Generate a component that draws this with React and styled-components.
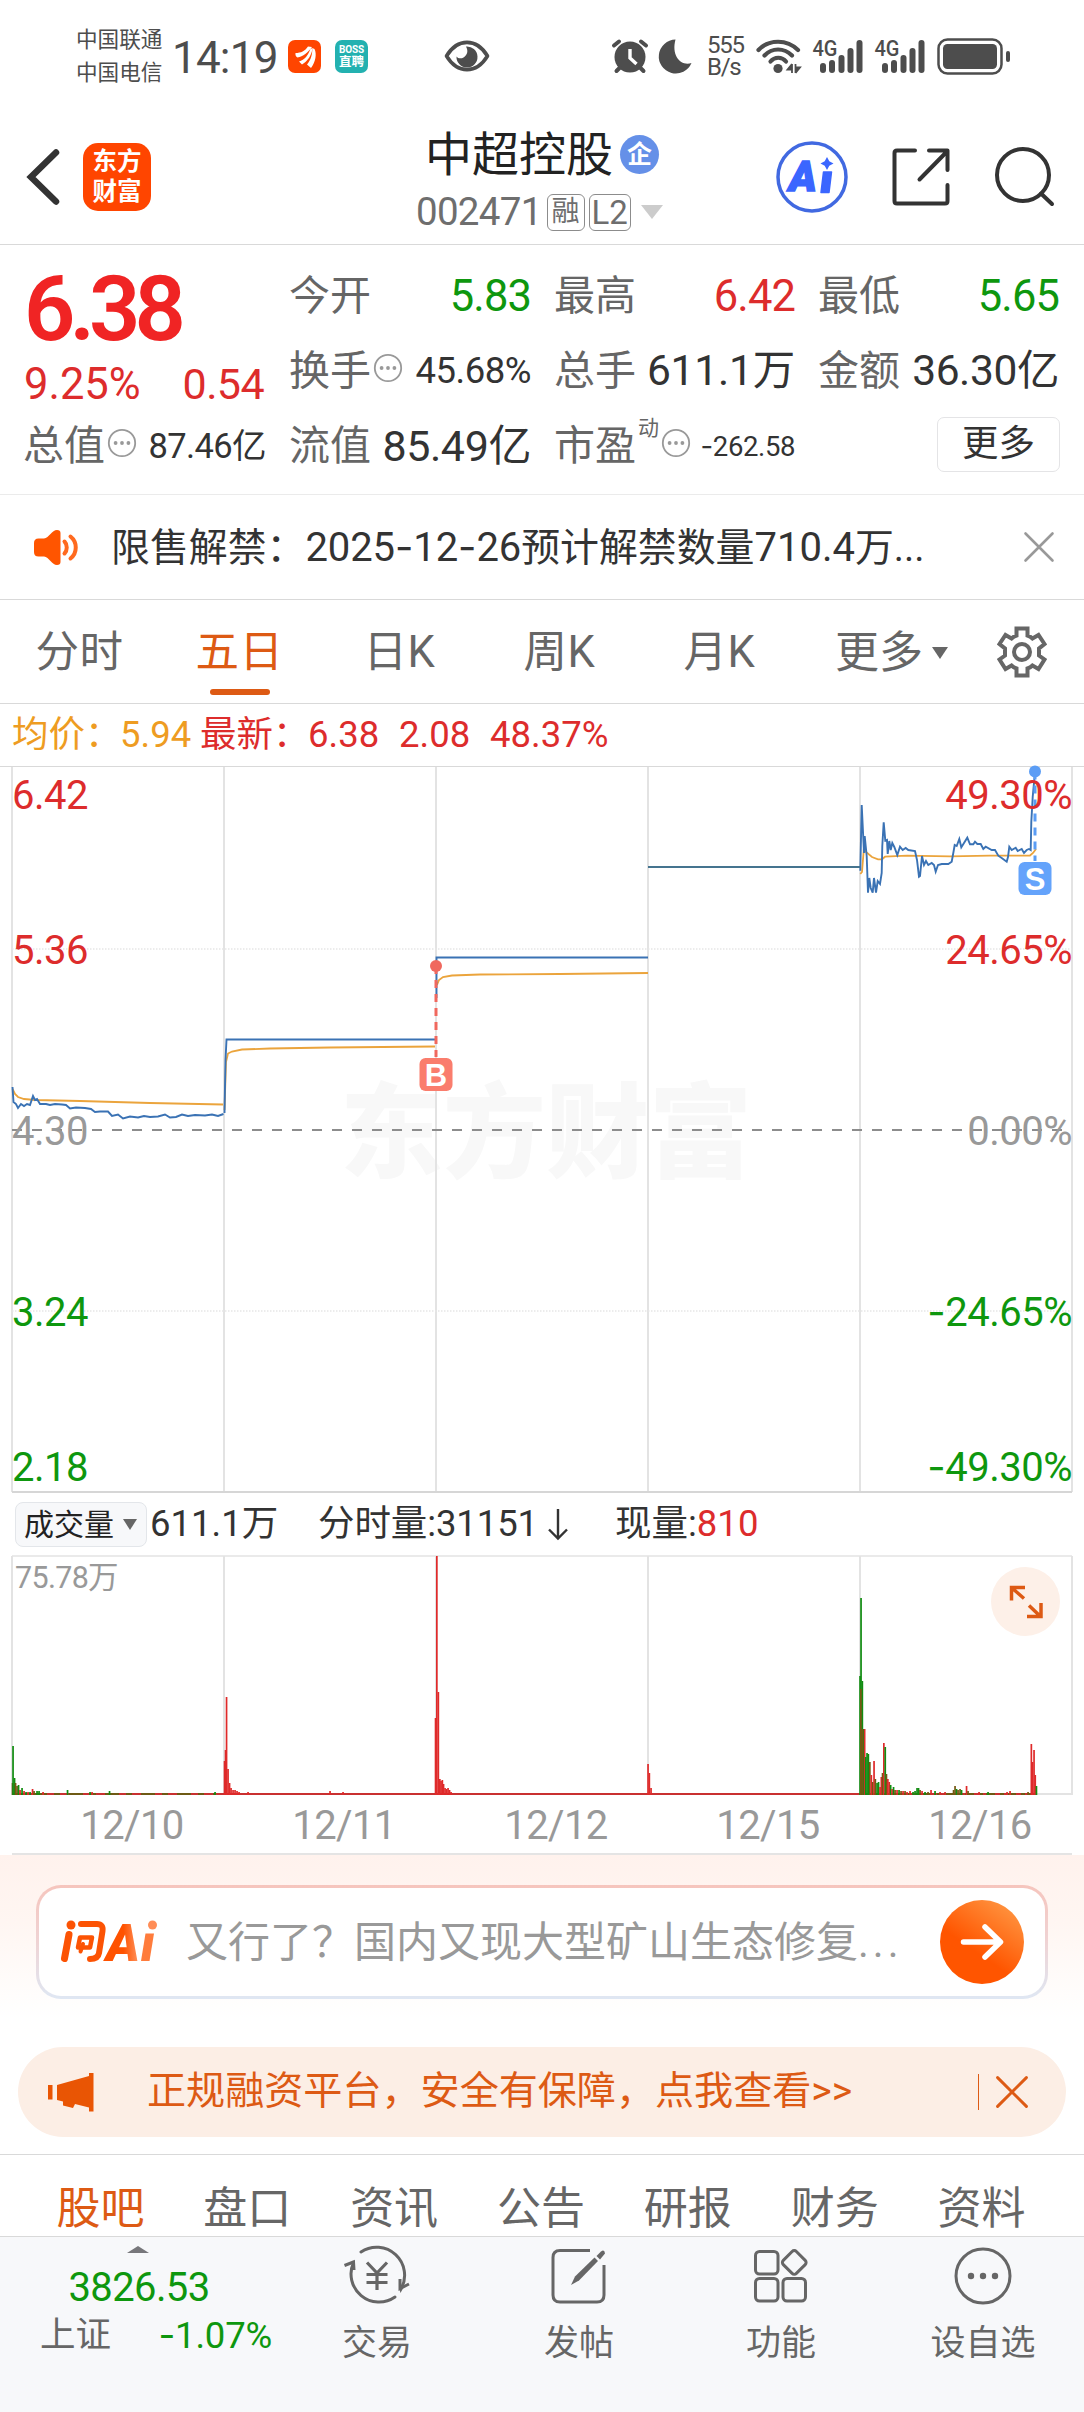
import React from "react";
import styled, { createGlobalStyle } from "styled-components";

const GlobalStyle = createGlobalStyle`
  :root {
    --txt: #333333;
    --txt-dark: #222222;
    --txt-mid: #666666;
    --txt-light: #999999;
    --status: #4d4d4d;
    --up: #dd2c2c;
    --down: #0e970e;
    --brand: #dd5a14;
    --line: #d9d9d9;
  }

  * {
    box-sizing: border-box;
  }

  body {
    margin: 0;
    background: #ffffff;
    color: var(--txt);
    font-family: Roboto, "Noto Sans CJK SC", sans-serif;
  }

  svg {
    display: block;
    flex: none;
    overflow: visible;
  }
`;

const Page = styled.div`
  width: 1084px;
  height: 2412px;
  overflow: hidden;
  display: flex;
  flex-direction: column;
  background: #ffffff;
`;

const Txt = styled.span`
  font-size: ${(props) => props.size}px;
  letter-spacing: ${(props) => props.ls || 0}px;
  font-weight: ${(props) => props.weight || 400};
  color: ${(props) => props.color || "inherit"};
  line-height: 1;
  white-space: nowrap;
`;

/* wide hyphen used in dates and negative values */
const Dash = styled.span`
  font-family: Inter, sans-serif;
`;

/* status bar */

const StatusBar = styled.div`
  height: 110px;
  padding: 2px 73px 0 76px;
  display: flex;
  align-items: center;
  color: var(--status);
`;

const Carriers = styled.div`
  display: flex;
  flex-direction: column;
  width: 96px;
  font-size: 21.6px;
  line-height: 33px;
`;

const Clock = styled.div`
  width: 116px;
  padding-top: 3px;
  font-size: 44px;
  letter-spacing: -0.8px;
  line-height: 1;
`;

const BossIcon = styled.div`
  width: 33px;
  height: 33px;
  margin: 0 76px 0 14px;
  border-radius: 7px;
  background: #23b1b0;
  color: #ffffff;
  display: flex;
  flex-direction: column;
  align-items: center;
  justify-content: center;
  font-weight: 700;
  font-size: 12.5px;
  line-height: 14px;
  white-space: nowrap;

  span:first-child {
    font-size: 10px;
    line-height: 11px;
    letter-spacing: -0.2px;
  }
`;

const StatusRight = styled.div`
  margin-left: auto;
  display: flex;
  align-items: center;
  gap: 12px;
`;

const NetSpeed = styled.div`
  width: 37px;
  margin: 0 0 0 3px;
  font-size: 24px;
  line-height: 22px;
  letter-spacing: -1.3px;
`;

/* header */

const Header = styled.div`
  height: 135px;
  padding: 0 30px 0 26px;
  display: flex;
  align-items: center;
  border-bottom: 1px solid var(--line);
`;

const AppLogo = styled.div`
  width: 68px;
  height: 68px;
  margin-left: 23px;
  border-radius: 15px;
  background: #ff4500;
  color: #ffffff;
  display: grid;
  place-content: center;
  font-weight: 700;
  font-size: 24.5px;
  line-height: 30px;
`;

const TitleBlock = styled.div`
  width: 248px;
  margin-left: 265px;
  padding-top: 4px;
  display: flex;
  flex-direction: column;
`;

const TitleRow = styled.div`
  height: 66px;
  padding-left: 9px;
  display: flex;
  align-items: center;
  gap: 7px;
  color: var(--txt-dark);
`;

const CodeRow = styled.div`
  height: 50px;
  display: flex;
  align-items: center;
  color: #6e6e6e;
`;

const CompanyBadge = styled.div`
  width: 39px;
  height: 39px;
  border-radius: 50%;
  background: #6590e8;
  color: #ffffff;
  display: grid;
  place-items: center;
  font-size: 25px;
  font-weight: 700;
  line-height: 1;
`;

const Tag = styled.div`
  width: ${(props) => props.w}px;
  height: 37px;
  margin-left: ${(props) => props.ml}px;
  border: 1.5px solid #8c8c8c;
  border-radius: 6px;
  display: grid;
  place-items: center;
  font-size: ${(props) => props.size}px;
  line-height: 1;
`;

const Triangle = styled.div`
  width: 0;
  height: 0;
  margin-left: ${(props) => props.ml || 0}px;
  border-left: ${(props) => props.w / 2}px solid transparent;
  border-right: ${(props) => props.w / 2}px solid transparent;
  border-top: ${(props) => props.h}px solid ${(props) => props.color};
`;

const HeaderActions = styled.div`
  margin-left: auto;
  display: flex;
  align-items: center;
  gap: 44px;
`;

/* quote panel */

const Quote = styled.div`
  height: 250px;
  padding: 14px 26px 0 24px;
  display: grid;
  grid-template-columns: 240px 239px 238px 238px;
  column-gap: 26px;
  border-bottom: 1px solid #ebebeb;
`;

const QuoteColumn = styled.div`
  display: flex;
  flex-direction: column;
`;

const LastPrice = styled.div`
  height: 101px;
  font-size: 90px;
  line-height: 101px;
  letter-spacing: -6px;
  font-weight: 600;
  color: #f02424;
`;

const ChangeRow = styled.div`
  height: 49px;
  display: flex;
  align-items: center;
  justify-content: space-between;
  color: var(--up);
`;

const Cell = styled.div`
  height: 75px;
  display: flex;
  align-items: center;
  justify-content: space-between;
  color: var(--txt);

  > span {
    margin-right: -2px;
  }
`;

const CellLabel = styled.div`
  display: flex;
  align-items: center;
  gap: 2px;
  margin-left: -1px;
  font-size: 41px;
  line-height: 1;
  color: var(--txt-mid);
  white-space: nowrap;

  sup {
    align-self: flex-start;
    margin-top: -8px;
    font-size: 21px;
    line-height: 1;
  }

  svg {
    margin-top: -7px;
  }
`;

const MoreButton = styled.button`
  width: 123px;
  height: 55px;
  margin: 8px -3px 0 auto;
  padding: 0;
  border: 1.5px solid #e4e4e6;
  border-radius: 7px;
  background: #ffffff;
  color: var(--txt);
  font-family: inherit;
  font-size: 36.5px;
  line-height: 1;
`;

/* notice */

const Notice = styled.div`
  height: 105px;
  padding: 0 30px 0 33px;
  display: flex;
  align-items: center;
  border-bottom: 1px solid var(--line);
`;

const NoticeText = styled.div`
  flex: 1;
  margin-left: 32px;
  font-size: 39.5px;
  line-height: 1;
  white-space: nowrap;
`;

/* period tabs */

const PeriodTabs = styled.div`
  height: 104px;
  display: flex;
  align-items: center;
  border-bottom: 1px solid var(--line);
  color: var(--txt-mid);
`;

const PeriodTab = styled.div`
  width: 160px;
  height: 103px;
  display: flex;
  flex-direction: column;
  align-items: center;
  font-size: 43.5px;
  line-height: 106px;
  letter-spacing: 0.5px;
  text-indent: -1px;
  color: ${(props) => (props.active ? "var(--brand)" : "inherit")};

  &::after {
    content: "";
    width: 60px;
    height: 6px;
    margin-top: -17px;
    border-radius: 3px;
    background: ${(props) => (props.active ? "var(--brand)" : "transparent")};
  }
`;

const PeriodMore = styled.div`
  margin-left: 35px;
  width: 161px;
  padding-top: 2px;
  display: flex;
  align-items: center;
  gap: 9px;
  font-size: 44px;
  line-height: 1;
`;

const Legend = styled.div`
  height: 63px;
  padding: 1px 0 0 12px;
  display: flex;
  align-items: center;
  border-bottom: 1px solid var(--line);
  font-size: 36.5px;
  line-height: 1;
  color: var(--up);
  white-space: pre;
`;

const LegendItem = styled.span`
  width: ${(props) => props.w}px;
  color: ${(props) => props.color || "inherit"};
`;

/* volume */

const VolumeHeader = styled.div`
  height: 61px;
  padding-left: 15px;
  display: flex;
  align-items: center;
  font-size: 36.5px;
  line-height: 1;
  white-space: nowrap;
`;

const VolumeSelect = styled.div`
  width: 132px;
  height: 45px;
  margin-right: 3px;
  padding-left: 8px;
  display: flex;
  align-items: center;
  gap: 9px;
  border: 1.5px solid #e3e6ea;
  border-radius: 8px;
  background: #f7f8fa;
  font-size: 30px;
  color: var(--txt-dark);
`;

const VolumeTotal = styled.div`
  width: 168px;
`;

const VolumeArrow = styled.div`
  margin: 0 47px 0 10px;
`;

const PlotArea = styled.div`
  position: relative;
`;

const ExpandButton = styled.div`
  position: absolute;
  top: 12px;
  right: 24px;
  width: 69px;
  height: 69px;
  border-radius: 50%;
  background: #fdf0e8;
  display: grid;
  place-items: center;
`;

const Dates = styled.div`
  height: 60px;
  margin: 0 12px;
  padding: 3px 0 0 14px;
  display: grid;
  grid-template-columns: repeat(5, 212px);
  align-items: center;
  justify-items: center;
  border-bottom: 2px solid #e4e4e4;
  font-size: 40px;
  line-height: 1;
  letter-spacing: -0.6px;
  color: var(--txt-light);
`;

/* AI prompt and banner */

const AiSection = styled.div`
  height: 192px;
  padding: 30px 36px 0;
  background: linear-gradient(#fff2ed 0%, #fff6f2 35%, #ffffff 85%);
`;

const AiBox = styled.div`
  height: 114px;
  padding: 0 21px;
  display: flex;
  align-items: center;
  border: 3px solid transparent;
  border-radius: 25px;
  background: linear-gradient(#ffffff, #ffffff) padding-box,
    linear-gradient(#f6c5bd, #efd3d4 50%, #dfe7f3) border-box;
`;

const AiQuestion = styled.div`
  flex: 1;
  margin-left: 27px;
  padding-top: 2px;
  font-size: 42px;
  line-height: 1;
  color: var(--txt-light);
  white-space: nowrap;
`;

const AiGo = styled.div`
  width: 84px;
  height: 84px;
  border-radius: 50%;
  background: linear-gradient(35deg, #ff5500 40%, #ff9440 90%);
  display: grid;
  place-items: center;
`;

const Banner = styled.div`
  height: 90px;
  margin: 0 18px 17px;
  padding: 0 38px 0 30px;
  display: flex;
  align-items: center;
  border-radius: 45px;
  background: #fceee5;
  color: var(--brand);
`;

const BannerText = styled.div`
  flex: 1;
  margin-left: 53px;
  font-size: 39.1px;
  line-height: 1;
  white-space: nowrap;
`;

const BannerLine = styled.div`
  width: 1.5px;
  height: 36px;
  margin-right: 17px;
  background: var(--brand);
`;

/* info tabs */

const InfoTabs = styled.div`
  height: 83px;
  padding: 22px 29px 0 27px;
  display: grid;
  grid-template-columns: repeat(7, 1fr);
  justify-items: center;
  border-top: 1px solid var(--line);
  border-bottom: 1px solid var(--line);
`;

const InfoTab = styled.div`
  font-size: 44px;
  line-height: 64px;
  color: ${(props) => (props.active ? "var(--brand)" : "var(--txt-mid)")};
`;

/* bottom nav */

const BottomNav = styled.div`
  flex: 1;
  display: grid;
  grid-template-columns: 276px repeat(4, 202px);
  background: #f7f8fa;
  color: var(--txt-mid);
`;

const IndexBox = styled.div`
  padding-top: 9px;
  display: flex;
  flex-direction: column;
  align-items: center;
`;

const IndexValue = styled.div`
  height: 50px;
  margin-top: 10px;
  padding-left: 2px;
  font-size: 40px;
  line-height: 50px;
  letter-spacing: -0.6px;
  color: var(--down);
`;

const IndexRow = styled.div`
  width: 232px;
  height: 46px;
  margin-left: 36px;
  display: flex;
  align-items: center;
  justify-content: space-between;
  font-size: 35.5px;
  line-height: 1;
`;

const NavItem = styled.div`
  display: flex;
  flex-direction: column;
  align-items: center;
  padding-top: 8px;
  font-size: 35px;
  line-height: 1;

  span {
    margin-top: 19px;
  }
`;

const DotsIcon = ({ size = 30, stroke = 1.8, color = "#999", r = 1.9 }) => (
  <svg width={size} height={size} viewBox="0 0 30 30" fill="none">
    <circle cx="15" cy="15" r={15 - stroke} stroke={color} strokeWidth={stroke} />
    <circle cx="8.6" cy="15" r={r} fill={color} />
    <circle cx="15" cy="15" r={r} fill={color} />
    <circle cx="21.4" cy="15" r={r} fill={color} />
  </svg>
);

const Cross = ({ size, color, width }) => (
  <svg width={size} height={size} viewBox="0 0 30 30" fill="none">
    <path d="M1.5 1.5L28.5 28.5M28.5 1.5L1.5 28.5" stroke={color} strokeWidth={width} strokeLinecap="round" />
  </svg>
);

const Signal = () => (
  <svg width="50" height="36" viewBox="0 0 50 36" fill="#4d4d4d">
    <text x="-0.5" y="18" fontSize="22.5" fontWeight="500" fontFamily="Roboto" textLength="25" lengthAdjust="spacingAndGlyphs">
      4G
    </text>
    <rect x="7" y="25" width="6" height="10" rx="3" />
    <rect x="16" y="22" width="6" height="13" rx="3" />
    <rect x="25.5" y="17" width="6" height="18" rx="3" />
    <rect x="34.5" y="10" width="6" height="25" rx="3" />
    <rect x="43.5" y="2" width="6" height="33" rx="3" />
  </svg>
);

function Status() {
  return (
    <StatusBar>
      <Carriers>
        <span>中国联通</span>
        <span>中国电信</span>
      </Carriers>
      <Clock>14:19</Clock>
      <svg width="33" height="33" viewBox="0 0 33 33">
        <rect width="33" height="33" rx="7" fill="#ff4500" />
        <g fill="#fff">
          <path d="M7.500 13C13 13 17 11 20 6.500L24 7C20 12.500 15 16.500 9.500 17.500Q7 16 7.500 13Z" />
          <path d="M11 21.500C16.500 20 20.500 15 22.500 8.500H24.500C23.500 15 20 21 14 24.500Z" />
          <path d="M19 24.500C23 20 24.500 14 24.300 8L26.500 9C29 14 27.500 22 23 28Z" />
        </g>
      </svg>
      <BossIcon>
        <span>BOSS</span>
        <span>直聘</span>
      </BossIcon>
      <svg width="46" height="32" viewBox="0 0 46 32" fill="none">
        <path d="M2.5 16C8 7 15 2.4 23 2.4S38 7 43.5 16C38 25 31 29.6 23 29.6S8 25 2.5 16Z" stroke="#4d4d4d" strokeWidth="3.6" strokeLinejoin="round" />
        <path d="M22 6.500A10.500 10.500 0 1 1 12.500 16.500C14 18.500 17 19 19.500 17.500C23.500 15 24.500 11 22 6.500Z" fill="#4d4d4d" />
      </svg>
      <StatusRight>
        <svg width="36" height="34" viewBox="0 0 36 34" fill="none" stroke="#4d4d4d">
          <circle cx="18" cy="18" r="15.5" fill="#4d4d4d" stroke="none" />
          <path d="M2 6.500L7 2.500M34 6.500L29 2.500M4.500 32L8 28.500M31.500 32L28 28.500" strokeWidth="4" strokeLinecap="round" />
          <path d="M18 10V19L24.500 25" stroke="#fff" strokeWidth="3.4" />
        </svg>
        <svg width="32" height="34" viewBox="0 0 32 34" fill="#4d4d4d">
          <path d="M15.500 0.500A17 17 0 1 0 31.500 24C21 27.500 11 17 15.500 0.500Z" />
        </svg>
        <NetSpeed>
          555
          <br />
          B/s
        </NetSpeed>
        <svg width="45" height="36" viewBox="0 0 45 36" fill="none" stroke="#4d4d4d" strokeWidth="4.2" strokeLinecap="round">
          <path d="M2.500 12C13 1 31 1 42 12" />
          <path d="M8.500 17.500C16 9.500 28 9.500 36 17.500" />
          <path d="M14.500 23.500C18.500 18.500 26 18.500 30 23.500" />
          <circle cx="22" cy="30.5" r="4.6" fill="#4d4d4d" stroke="none" />
          <path d="M36 26V35M36 26L31.500 31.500H36M39.500 35V26M39.500 35L44 29.500H39.500" strokeWidth="1.8" strokeLinecap="butt" fill="#4d4d4d" />
        </svg>
        <Signal />
        <Signal />
        <svg width="74" height="37" viewBox="0 0 74 37" fill="none">
          <rect x="1.5" y="1.5" width="63" height="34" rx="9" stroke="#4d4d4d" strokeWidth="2.5" />
          <rect x="6" y="6" width="54" height="25" rx="4.5" fill="#4d4d4d" />
          <rect x="69" y="13" width="4" height="11" rx="2" fill="#4d4d4d" />
        </svg>
      </StatusRight>
    </StatusBar>
  );
}

function TopHeader() {
  return (
    <Header>
      <svg width="34" height="56" viewBox="0 0 34 56" fill="none">
        <path d="M30 3.500L5 28L30 52.500" stroke="#333" strokeWidth="6.5" strokeLinecap="round" />
      </svg>
      <AppLogo>
        <span>东方</span>
        <span>财富</span>
      </AppLogo>
      <TitleBlock>
        <TitleRow>
          <Txt size={47}>中超控股</Txt>
          <CompanyBadge>企</CompanyBadge>
        </TitleRow>
        <CodeRow>
          <Txt size={38.5} ls={-0.7}>
            002471
          </Txt>
          <Tag w={38} ml={5} size={28}>
            融
          </Tag>
          <Tag w={42} ml={4} size={33}>
            L2
          </Tag>
          <Triangle w={22} h={14} ml={10} color="#cccccc" />
        </CodeRow>
      </TitleBlock>
      <HeaderActions>
        <svg width="72" height="72" viewBox="0 0 72 72" fill="none">
          <circle cx="36" cy="36" r="34" stroke="#4169e1" strokeWidth="3.5" />
          <text x="13" y="50" fontSize="42" fontWeight="900" fontStyle="italic" fontFamily="Roboto" fill="#3a66ff" stroke="#3a66ff" strokeWidth="1.5">
            A
          </text>
          <path d="M47.500 31H55.500L53 51.500H45Z" fill="#3a66ff" stroke="#3a66ff" strokeWidth="1.5" strokeLinejoin="round" />
          <path d="M51 16L53.300 20.200L57.500 22.500L53.300 24.800L51 29L48.700 24.800L44.500 22.500L48.700 20.200Z" fill="#3a66ff" />
        </svg>
        <svg width="58" height="58" viewBox="0 0 58 58" fill="none" stroke="#333" strokeWidth="4" strokeLinecap="round" strokeLinejoin="round">
          <path d="M23 2.500H5Q2.500 2.500 2.500 5V53Q2.500 55.500 5 55.500H53Q55.500 55.500 55.500 53V37" />
          <path d="M37 2.500H55.500V22M55 3.500L27.500 31.500" />
        </svg>
        <svg width="60" height="60" viewBox="0 0 60 60" fill="none" stroke="#333" strokeWidth="4" strokeLinecap="round">
          <circle cx="29" cy="28" r="26" />
          <path d="M47 46.500L58 57" />
        </svg>
      </HeaderActions>
    </Header>
  );
}

function QuotePanel() {
  return (
    <Quote>
      <QuoteColumn>
        <LastPrice>6.38</LastPrice>
        <ChangeRow>
          <Txt size={43.5}>9.25%</Txt>
          <Txt size={43} ls={-0.6}>
            0.54
          </Txt>
        </ChangeRow>
        <Cell>
          <CellLabel>
            总值
            <DotsIcon />
          </CellLabel>
          <Txt size={34.5} ls={-0.6}>
            87.46亿
          </Txt>
        </Cell>
      </QuoteColumn>
      <QuoteColumn>
        <Cell>
          <CellLabel>今开</CellLabel>
          <Txt size={43.5} ls={-0.9} color="var(--down)">
            5.83
          </Txt>
        </Cell>
        <Cell>
          <CellLabel>
            换手
            <DotsIcon />
          </CellLabel>
          <Txt size={36.5} ls={-0.5}>
            45.68%
          </Txt>
        </Cell>
        <Cell>
          <CellLabel>流值</CellLabel>
          <Txt size={43} ls={-0.4}>
            85.49亿
          </Txt>
        </Cell>
      </QuoteColumn>
      <QuoteColumn>
        <Cell>
          <CellLabel>最高</CellLabel>
          <Txt size={43.5} ls={-0.9} color="var(--up)">
            6.42
          </Txt>
        </Cell>
        <Cell>
          <CellLabel>总手</CellLabel>
          <Txt size={42.5} ls={-0.2}>
            611.1万
          </Txt>
        </Cell>
        <Cell>
          <CellLabel>
            市盈<sup>动</sup>
            <DotsIcon />
          </CellLabel>
          <Txt size={27.5} ls={-0.4}>
            <Dash>-</Dash>262.58
          </Txt>
        </Cell>
      </QuoteColumn>
      <QuoteColumn>
        <Cell>
          <CellLabel>最低</CellLabel>
          <Txt size={43.5} ls={-0.9} color="var(--down)">
            5.65
          </Txt>
        </Cell>
        <Cell>
          <CellLabel>金额</CellLabel>
          <Txt size={42.5} ls={-0.4}>
            36.30亿
          </Txt>
        </Cell>
        <MoreButton>更多</MoreButton>
      </QuoteColumn>
    </Quote>
  );
}

const DAY_X = [12, 224, 436, 648, 860, 1072];

const BLUE = "#3a72b4";
const ORANGE = "#eba43c";

const pricePaths = [
  "12.5,1087 13.5,1102 16,1104 18,1108 21,1104 24,1106 27,1104 30,1105 33,1096 35,1100 37,1099 40,1104 46,1104 50,1105 55,1104 62,1104.5 66,1105 70,1108.5 76,1107.5 85,1108 91,1109 95,1112 100,1111.5 108,1111.5 112,1116 118,1114.5 123,1118.5 130,1116.5 138,1117.5 144,1116 150,1117 158,1116.5 165,1114.5 170,1117.5 176,1117 182,1114.5 188,1116 195,1115 205,1115.5 212,1114.5 218,1116 223.5,1114",
  "224.5,1113 225.5,1060 226.5,1039.5 435,1039.5",
  "436.5,998 436.5,957.5 648,957.5",
  "860.3,870.7 861.7,805 864,853 864.7,836 866.7,856 868,892.7 869.3,878 870.7,888 872.7,892.7 874,878 876,892.7 877.7,881 880,884 881.7,873 882.3,846 883.7,822.3 885.3,840.7 887,840 887.7,854 889.3,841 890.7,850 892.3,843 894.3,847 897.3,855 900,846.7 902.7,850 905.7,848 908.3,850 915,851 917,860 919,876.7 920,876 922,856 924,865 926,861 928.3,865 931.7,863 934,865 935.7,871.7 938,865 941.7,864 948.3,864 951.7,861.7 953.3,853 954.7,845 956.7,846 959.3,839 961.3,847.3 964,843 967.3,837.7 970,844.3 973.3,844.3 975,841.7 977.3,844 980.7,844 983.3,849 985.7,846.7 991.7,850 995,850 998.3,855.7 1001.7,858 1006.7,861.7 1008,857 1009.3,846.7 1011.7,850 1015.7,847.7 1017.7,851 1021.7,849 1024,853 1026.7,850 1029,849 1030.7,850 1031.3,822 1032.7,797 1035,772",
];

const averagePaths = [
  "12.5,1089 15,1094 18,1097 24,1099 35,1100 80,1101 150,1103 223,1104.5",
  "224.5,1110 226,1062 228,1053.5 232,1051.5 242,1049.5 270,1048.5 330,1047.5 435,1046.5",
  "437,985 439,980 443,977 452,975.5 480,974.5 560,974 648,973",
  "860.3,874 862,872 864,847 866,852 872,857 878,859.3 882,859.3 885,856.7 907,855.7 950,856.3 990,855.7 1030,855.5 1033,853 1036,849",
];

const gridLabels = [
  { y: 809, left: "6.42", right: "49.30%", color: "#dd2c2c" },
  { y: 964, left: "5.36", right: "24.65%", color: "#dd2c2c" },
  { y: 1145, left: "4.30", right: "0.00%", color: "#999999" },
  { y: 1326, left: "3.24", right: "24.65%", negative: true, color: "#0e970e" },
  { y: 1481, left: "2.18", right: "49.30%", negative: true, color: "#0e970e" },
];

function Marker({ x, dotY, endY, color, fill, letter }) {
  return (
    <g>
      <line x1={x} y1={dotY} x2={x} y2={endY} stroke={color} strokeWidth="3" strokeDasharray="8 6" />
      <circle cx={x} cy={dotY} r="6" fill={color} />
      <rect x={x - 16.5} y={endY + 1} width="33" height="33" rx="6" fill={fill} />
      <text x={x} y={endY + 28.5} fontSize="31" fontWeight="700" fontFamily="Liberation Sans" textAnchor="middle" fill="#fff">
        {letter}
      </text>
    </g>
  );
}

function PriceChart() {
  return (
    <svg width="1084" height="727" viewBox="0 767 1084 727" fill="none">
      <text x="546" y="1170" fontSize="103" fontWeight="900" fontFamily="Noto Sans CJK SC" textAnchor="middle" fill="#f8f8f8">
        东方财富
      </text>
      {DAY_X.map((x) => (
        <line key={x} x1={x} y1="767" x2={x} y2="1492" stroke="#e3e3e3" strokeWidth="2" />
      ))}
      {[949, 1311].map((y) => (
        <line key={y} x1="12" y1={y} x2="1072" y2={y} stroke="#e6e6e6" strokeWidth="1.5" strokeDasharray="1.5 1.5" />
      ))}
      <line x1="12" y1="1130" x2="1072" y2="1130" stroke="#8c8c8c" strokeWidth="2" strokeDasharray="10 10" />
      <line x1="12" y1="1492" x2="1072" y2="1492" stroke="#d6d6d6" strokeWidth="2" />
      {averagePaths.map((points) => (
        <polyline key={points} points={points} stroke={ORANGE} strokeWidth="1.8" />
      ))}
      {pricePaths.map((points) => (
        <polyline key={points} points={points} stroke={BLUE} strokeWidth="1.9" />
      ))}
      <line x1="648" y1="867" x2="860" y2="867" stroke="#45748f" strokeWidth="2" />
      <Marker x={436} dotY={966} endY={1057} color="#f0685e" fill="#fa7d6d" letter="B" />
      <Marker x={1035} dotY={771.5} endY={861} color="#5b9df5" fill="#64a3fb" letter="S" />
      <g fontFamily="Roboto" fontSize="40" letterSpacing="-0.5">
        {gridLabels.map(({ y, left, right, negative, color }) => (
          <g key={left} fill={color}>
            <text x="12" y={y}>
              {left}
            </text>
            <text x="1072" y={y} textAnchor="end">
              {negative && <tspan fontFamily="Inter">-</tspan>}
              {right}
            </text>
          </g>
        ))}
      </g>
    </svg>
  );
}

const R = "#df2a2a";
const G = "#118c11";
const M = "#765612";

// [x, bar height, colour]
const volumeBars = [
  [12.5, 12, M], [13, 49, G], [14.5, 17, G], [15.5, 12, M], [17, 9, M], [18.5, 10, G], [20, 5, R], [22, 7, G], [24, 4, R], [26, 3, G],
  [28, 3, R], [30, 3, G], [32.5, 6, R], [34, 4, M], [37, 4, G], [39, 4, G], [43, 3, R], [67.5, 5, G], [90, 3, G], [92, 3, R], [109.5, 4, G], [215, 3, G],
  [224.5, 34, R], [225.5, 45, R], [226.5, 98, R], [228, 26, R], [229.5, 12, R], [231, 7, R], [233, 5, R], [235, 5, R], [237, 4, R], [239, 3, R],
  [248, 3, R], [330, 4, R], [343, 3, R],
  [435.5, 77, R], [436.8, 239, R], [438.3, 103, R], [439.8, 16, R], [441, 14, R], [442.3, 15, R], [443.5, 11, R], [445, 7, R], [446.5, 6, R],
  [448, 7, R], [449.5, 5, R], [451, 3, R],
  [648, 31, R], [649.3, 22, R], [651, 7, R],
  [860, 119, G], [861, 197, G], [862.3, 114, G], [863.3, 66, G], [864.6, 66, R], [860.8, 106, M], [862.3, 66, M], [865.7, 38, G], [867, 42, G], [868.3, 41, G],
  [869.8, 33, M], [871.3, 20, R], [872.7, 13, M], [874, 34, R], [875.3, 16, M], [877, 12, G], [878.5, 13, G], [880, 8, R], [881.3, 18, R],
  [882.5, 22, M], [883.8, 52, R], [885.2, 48, G], [886.4, 21, M], [887.8, 16, R], [889.2, 13, R], [890.6, 10, G], [892, 6, R], [893.5, 8, G],
  [895, 5, M], [897, 5, R], [899, 5, G], [901, 4, M], [903, 4, R], [905, 4, M], [907, 3, R], [910, 4, R], [913, 3, G], [915, 4, G], [917, 7, G],
  [918.5, 7, G], [920, 5, M], [922, 4, R], [925, 3, G], [928, 3, M], [931, 5, R], [935, 4, G], [940, 3, R], [945, 3, R], [953.5, 5, M],
  [955, 9, M], [956.5, 6, G], [958, 5, M], [960, 6, M], [961.5, 5, G], [966.5, 9, R], [968, 4, M], [979, 3, R], [988, 3, G], [1007, 3, R], [1010, 4, R], [1028, 3, M],
  [1031.3, 51, R], [1032.5, 33, R], [1034, 45, R], [1035.2, 20, R], [1036.4, 9, G],
];

function VolumeChart() {
  return (
    <PlotArea>
      <svg width="1084" height="240" viewBox="0 1554 1084 240" fill="none">
        <line x1="12" y1="1555" x2="1072" y2="1555" stroke="#e3e3e3" strokeWidth="1.5" />
        {DAY_X.map((x) => (
          <line key={x} x1={x} y1="1555" x2={x} y2="1794" stroke="#e3e3e3" strokeWidth="2" />
        ))}
        <line x1="12" y1="1793" x2="1072" y2="1793" stroke="#e3e3e3" strokeWidth="2" />
        <line x1="12" y1="1793" x2="1036" y2="1793" stroke="#c93030" strokeWidth="2" />
        <line x1="18" y1="1793" x2="215" y2="1793" stroke="#6e5a14" strokeWidth="2" strokeDasharray="6 9 14 7" />
        <line x1="860" y1="1793" x2="1036" y2="1793" stroke="#6e5a14" strokeWidth="2" strokeDasharray="9 5 4 3" />
        {volumeBars.map(([x, h, color], i) => (
          <rect key={i} x={x - 0.8} y={1794 - h} width="1.7" height={h} fill={color} />
        ))}
        <text x="15" y="1587" fontSize="30.5" letterSpacing="-0.7" fontFamily="Roboto, Noto Sans CJK SC" fill="#999">
          75.78万
        </text>
      </svg>
      <ExpandButton>
        <svg width="34" height="34" viewBox="0 0 34 34" fill="none" stroke="#dd5a14" strokeWidth="3.5">
          <path d="M16 2.500H2.500V15.500M3 3L15 13.500" />
          <path d="M18 31.500H32V18M31 31L20 20.500" />
        </svg>
      </ExpandButton>
    </PlotArea>
  );
}

function AiPrompt() {
  return (
    <AiSection>
      <AiBox>
        <svg width="99" height="46" viewBox="0 0 99 46">
          <defs>
            <linearGradient id="askAi" x1="0" x2="1" y1="0" y2="0">
              <stop offset="0.55" stopColor="#ff5200" />
              <stop offset="1" stopColor="#ff9a68" />
            </linearGradient>
          </defs>
          <g fill="none" stroke="#fc5304" strokeLinecap="round" strokeLinejoin="round">
            <path d="M9 15.500L4.500 39.500" strokeWidth="7" />
            <path d="M21 5H37Q43.500 5 42.500 12L39 34Q38 40 30 40" strokeWidth="6" />
            <path d="M20 18.500H32L30 28.500H18Z" strokeWidth="4.5" />
            <path d="M23 25L20.500 32.500" strokeWidth="4" />
          </g>
          <circle cx="11" cy="6" r="4.5" fill="#fc5304" />
          <text x="46" y="42" fontSize="51" fontWeight="900" fontStyle="italic" fontFamily="Roboto" fill="url(#askAi)" textLength="34" lengthAdjust="spacingAndGlyphs">
            A
          </text>
          <path d="M85.500 14.500H94L89.500 42H81Z" fill="#ff7c3c" />
          <circle cx="92.5" cy="6" r="4.5" fill="#ff8d57" />
        </svg>
        <AiQuestion>
          又行了？国内又现大型矿山生态修复
          <Txt size={41} ls={4}>
            ...
          </Txt>
        </AiQuestion>
        <AiGo>
          <svg width="44" height="38" viewBox="0 0 44 38" fill="none" stroke="#fff" strokeWidth="5.5" strokeLinecap="round" strokeLinejoin="round">
            <path d="M3.500 19H40M25 4L40.500 19L25 34" />
          </svg>
        </AiGo>
      </AiBox>
    </AiSection>
  );
}

const periods = ["分时", "五日", "日K", "周K", "月K"];
const days = ["12/10", "12/11", "12/12", "12/15", "12/16"];
const infoTabs = ["股吧", "盘口", "资讯", "公告", "研报", "财务", "资料"];

export default function App() {
  return (
    <>
      <GlobalStyle />
      <Page>
        <Status />
        <TopHeader />
        <QuotePanel />
        <Notice>
          <svg width="46" height="37" viewBox="0 0 46 37" fill="none">
            <path d="M1 14Q1 9.500 5.500 9.500H11C16 9 19 1 24 1Q27.500 1 27.500 4V33Q27.500 36 24 36C19 36 16 28 11 27.500H5.500Q1 27.500 1 23Z" fill="#ff5500" />
            <path d="M31.500 12.500C34.500 15.500 34.500 21.500 31.500 24.500M37.500 7.500C44.500 13 44.500 24 37.500 29.500" stroke="#ff6a1f" strokeWidth="4" strokeLinecap="round" />
          </svg>
          <NoticeText>
            <Txt size={38.9}>限售解禁：</Txt>
            <Txt size={40} ls={-0.1}>
              2025<Dash>-</Dash>12<Dash>-</Dash>26
            </Txt>
            <Txt size={38.9}>预计解禁数量</Txt>
            <Txt size={40}>710.4</Txt>
            <Txt size={38.9}>万...</Txt>
          </NoticeText>
          <Cross size={30} color="#999" width={2.6} />
        </Notice>
        <PeriodTabs>
          {periods.map((name) => (
            <PeriodTab key={name} active={name === "五日" ? 1 : undefined}>
              {name}
            </PeriodTab>
          ))}
          <PeriodMore>
            更多
            <Triangle w={16} h={12} color="#666666" />
          </PeriodMore>
          <svg width="52" height="52" viewBox="0 0 52 52" fill="none" stroke="#666" strokeWidth="4" strokeLinejoin="miter">
            <path d="M20.500 2.500H31.500V9.500Q34.500 10.500 36.500 12.500L42.500 9L48.500 18L43 22.500V29.500L48.500 33.500L42.500 43L36.500 39.500Q34.500 41.500 31.500 42.500V49.500H20.500V42.500Q17.500 41.500 15.500 39.500L9.500 43L3.500 33.500L9 29.500V22.500L3.500 18L9.500 9L15.500 12.500Q17.500 10.500 20.500 9.500Z" />
            <circle cx="26" cy="26" r="8" />
          </svg>
        </PeriodTabs>
        <Legend>
          <LegendItem w={108} color="#ee9c22">
            均价：
          </LegendItem>
          <LegendItem w={80} color="#ee9c22">
            5.94
          </LegendItem>
          <LegendItem w={108}>最新：</LegendItem>
          <LegendItem w={91}>6.38</LegendItem>
          <LegendItem w={91}>2.08</LegendItem>
          <LegendItem w={130}>48.37%</LegendItem>
        </Legend>
        <PriceChart />
        <VolumeHeader>
          <VolumeSelect>
            成交量
            <Triangle w={15} h={11} color="#666666" />
          </VolumeSelect>
          <VolumeTotal>611.1万</VolumeTotal>
          <Txt size={36.5} ls={-0.1}>
            分时量:31151
          </Txt>
          <VolumeArrow>
            <svg width="20" height="32" viewBox="0 0 20 32" fill="none" stroke="#333" strokeWidth="2.4">
              <path d="M10 0V30M1 20.500L10 29.500L19 20.500" />
            </svg>
          </VolumeArrow>
          <Txt size={36.5}>现量:</Txt>
          <Txt size={36.5} color="var(--up)">
            810
          </Txt>
        </VolumeHeader>
        <VolumeChart />
        <Dates>
          {days.map((day) => (
            <span key={day}>{day}</span>
          ))}
        </Dates>
        <AiPrompt />
        <Banner>
          <svg width="46" height="40" viewBox="0 0 46 40" fill="#e95504">
            <rect x="0" y="13" width="4.5" height="14.5" />
            <path d="M9 13L41 4V1H45.500V39.500H41V35.500L27 32L25 36L15 33.500V29.500L9 28Z" />
          </svg>
          <BannerText>正规融资平台，安全有保障，点我查看&gt;&gt;</BannerText>
          <BannerLine />
          <Cross size={32} color="#dd5a14" width={2.8} />
        </Banner>
        <InfoTabs>
          {infoTabs.map((name) => (
            <InfoTab key={name} active={name === "股吧" ? 1 : undefined}>
              {name}
            </InfoTab>
          ))}
        </InfoTabs>
        <BottomNav>
          <IndexBox>
            <svg width="22" height="7" viewBox="0 0 22 7" fill="#77777b">
              <path d="M0 7L11 0L22 7Z" />
            </svg>
            <IndexValue>3826.53</IndexValue>
            <IndexRow>
              上证
              <Txt size={36.5} ls={-0.2} color="var(--down)">
                <Dash>-</Dash>1.07%
              </Txt>
            </IndexRow>
          </IndexBox>
          <NavItem>
            <svg width="66" height="62" viewBox="0 0 66 62" fill="none" stroke="#666" strokeWidth="3">
              <path d="M17 7A28 28 0 0 1 57 44L56.500 42M51 52A28 28 0 0 1 9.500 17.500" strokeLinecap="round" />
              <path d="M0.500 20.500L9.500 17L10 25M56 34V43.500L65 39" />
              <path d="M23 17.500L33 28L43 17.500M33 28V45M22.500 29.500H43.500M22.500 37.500H43.500" strokeWidth="3.2" />
            </svg>
            <span>交易</span>
          </NavItem>
          <NavItem>
            <svg width="56" height="62" viewBox="0 0 56 62" fill="none" stroke="#666" strokeWidth="3">
              <path d="M39 5.500H9Q2 5.500 2 12.500V50Q2 57 9 57H46Q53 57 53 50V20" />
              <path d="M20 40L24 31.500L43.500 12.500L47 16L28 35.500Z" fill="#666" stroke="none" />
              <path d="M45.500 11L50 6.500Q53.500 4 54 8.500L49 14.500Z" fill="#666" stroke="none" />
            </svg>
            <span>发帖</span>
          </NavItem>
          <NavItem>
            <svg width="54" height="62" viewBox="0 0 54 62" fill="none" stroke="#666" strokeWidth="3">
              <rect x="1.5" y="6.5" width="22.5" height="22.5" rx="4" />
              <rect x="1.5" y="33.5" width="22.5" height="22.5" rx="4" />
              <rect x="29" y="33.5" width="22.5" height="22.5" rx="4" />
              <rect x="31" y="8.2" width="18.5" height="18.5" rx="3" transform="rotate(45 40.25 17.45)" />
            </svg>
            <span>功能</span>
          </NavItem>
          <NavItem>
            <svg width="58" height="62" viewBox="0 0 58 62" fill="none">
              <circle cx="29" cy="31" r="27" stroke="#666" strokeWidth="3" />
              <circle cx="17" cy="31" r="3.2" fill="#666" />
              <circle cx="29" cy="31" r="3.2" fill="#666" />
              <circle cx="41" cy="31" r="3.2" fill="#666" />
            </svg>
            <span>设自选</span>
          </NavItem>
        </BottomNav>
      </Page>
    </>
  );
}
